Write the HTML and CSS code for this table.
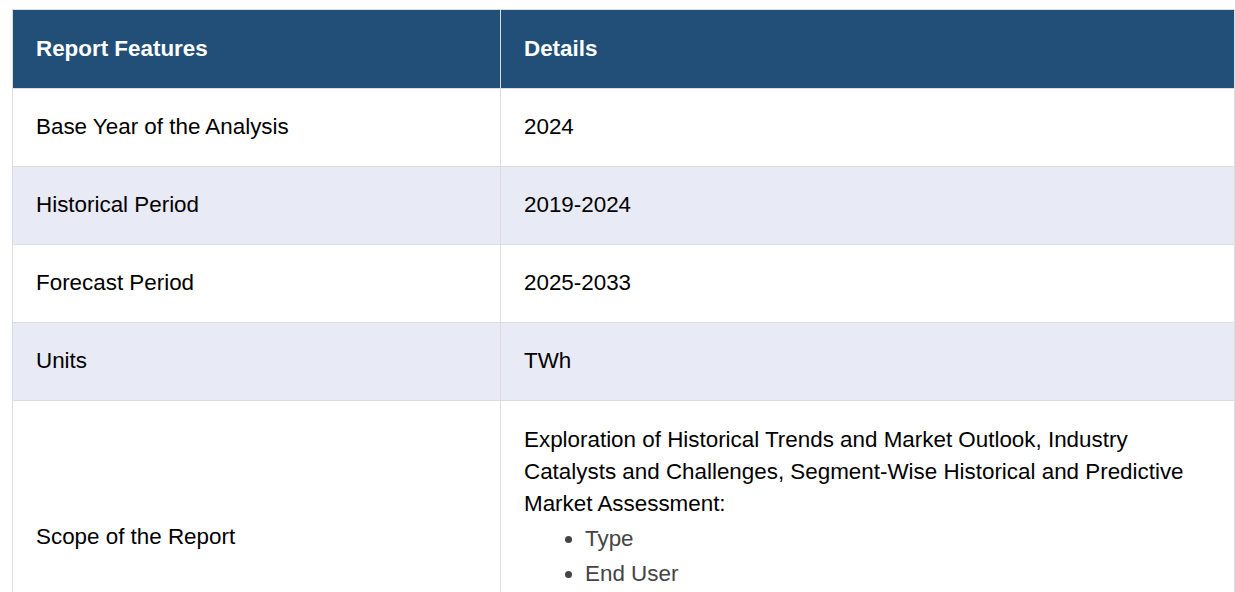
FILE: index.html
```html
<!DOCTYPE html>
<html lang="en">
<head>
<meta charset="utf-8">
<title>Report Features</title>
<link rel="stylesheet" href="styles.css">
</head>
<body>
<table class="report">
  <colgroup><col class="col-feat"><col class="col-det"></colgroup>
  <thead>
    <tr><th>Report Features</th><th>Details</th></tr>
  </thead>
  <tbody>
    <tr><td>Base Year of the Analysis</td><td>2024</td></tr>
    <tr class="alt"><td>Historical Period</td><td>2019-2024</td></tr>
    <tr><td>Forecast Period</td><td>2025-2033</td></tr>
    <tr class="alt"><td>Units</td><td>TWh</td></tr>
    <tr>
      <td>Scope of the Report</td>
      <td>
        <p class="scope">Exploration of Historical Trends and Market Outlook, Industry Catalysts and Challenges, Segment-Wise Historical and Predictive Market Assessment:</p>
        <ul class="seg">
          <li>Type</li>
          <li>End User</li>
        </ul>
      </td>
    </tr>
  </tbody>
</table>
</body>
</html>
```

FILE: styles.css
```css
html, body {
  background: #fff;
}
body {
  margin: 9px 0 0 12px;
  font-family: "Liberation Sans", Arial, sans-serif;
  font-size: 22.4px;
  color: #000;
}
.report {
  width: 1223px;
  border-collapse: collapse;
  table-layout: fixed;
}
.col-feat { width: 488px; }
.report th,
.report td {
  border: 1px solid #dddddd;
  padding: 22px 24px 23px 23px;
  line-height: 32px;
  text-align: left;
  vertical-align: middle;
}
.report th {
  background: #214f78;
  color: #fff;
  font-weight: bold;
  padding-top: 23px;
}
.report tr.alt td {
  background: #e8eaf6;
}
.scope {
  margin: 1px 0 0;
}
.seg {
  margin: 0 0 61px;
  padding-left: 61px;
  color: #444;
}
.seg li {
  margin-top: 3px;
  line-height: 32px;
}
```
